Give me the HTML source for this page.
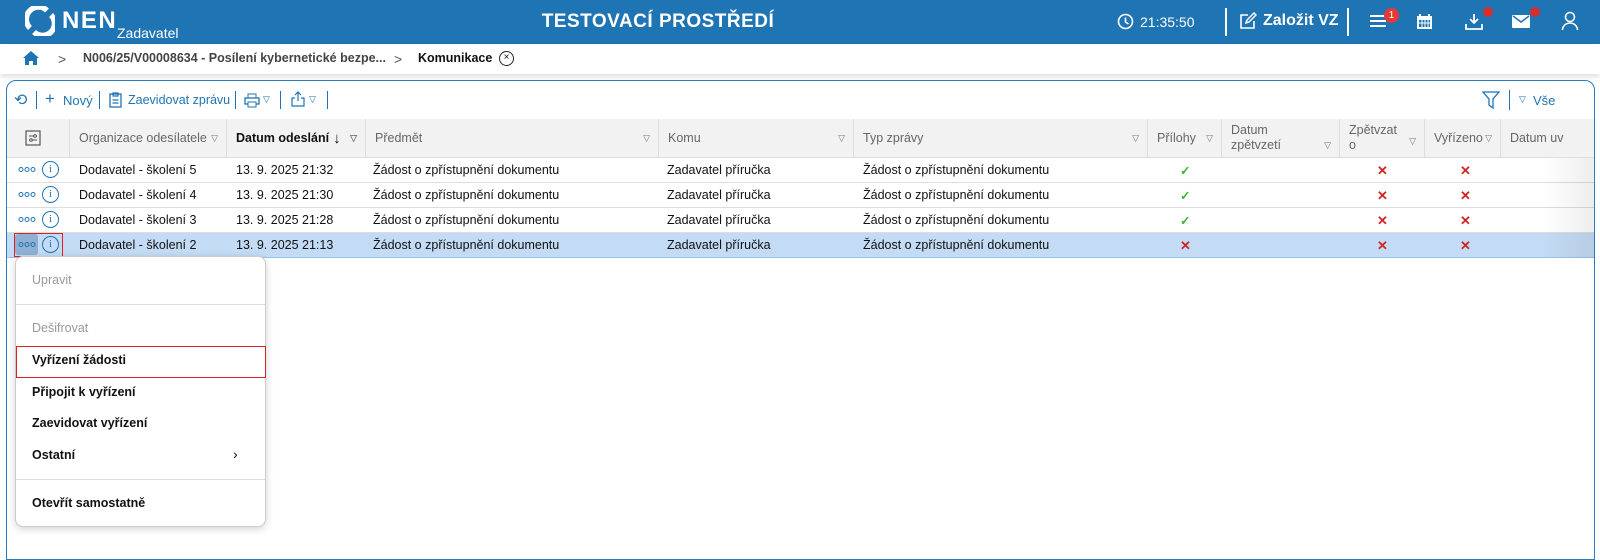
<!DOCTYPE html>
<html><head><meta charset="utf-8"><style>
*{box-sizing:border-box;margin:0;padding:0}
body{width:1600px;height:552px;overflow:hidden;background:#fff;font-family:"Liberation Sans",Arial,sans-serif;position:relative;font-size:12.5px;color:#111}
.abs{position:absolute}
.top{left:0;top:0;width:1600px;height:44px;background:#1f74b4;color:#fff}
.bc{left:0;top:44px;width:1600px;height:30px;background:#fff;box-shadow:0 3px 5px rgba(0,0,0,.12)}
.panel{left:6px;top:80px;width:1589px;height:480px;border:1px solid #2a7bbf;border-radius:10px 10px 0 0;background:#fff;overflow:hidden}
.th{position:absolute;top:38px;height:39px;background:#f2f2f2;border-right:1px solid #ddd;border-bottom:1px solid #ddd;color:#666;font-size:12.5px;padding:0 0 0 9px;display:flex;align-items:center}
.tri{position:absolute;right:8px;top:14px;font-size:9px;color:#777}
.row{position:absolute;left:0;width:1589px;height:25px;border-bottom:1px solid #ddd;font-size:12.5px}
.row span{position:absolute;top:5px}
.sel{background:#c3dbf4;border-bottom:1px solid #9cc3ea}
.x{color:#d32424;font-weight:bold;font-size:13px}
.ok{color:#3bb53b;font-weight:bold}
.menu{left:15px;top:256px;width:251px;height:271px;background:#fff;border:1px solid #ccc;border-radius:8px;box-shadow:0 2px 8px rgba(0,0,0,.18)}
.mi{position:absolute;left:16px;font-size:12.5px;font-weight:bold;color:#111}
.dots{position:absolute;left:11px;top:9px;width:18px;height:5px}
</style></head><body>
<div class="abs top">
 <svg class="abs" style="left:25px;top:6px" width="30" height="30" viewBox="0 0 30 30"><path d="M5 22 A11.5 11.5 0 0 1 22 4.5" stroke="#fff" stroke-width="5.5" fill="none"/><path d="M26 9 A11.5 11.5 0 0 1 9 26" stroke="#fff" stroke-width="5.5" fill="none"/></svg>
 <div class="abs" style="left:62px;top:7px;font-size:24px;font-weight:bold;letter-spacing:1.5px">NEN</div>
 <div class="abs" style="left:117px;top:25px;font-size:14px">Zadavatel</div>
 <div class="abs" style="left:0;width:1316px;top:11px;text-align:center;font-size:19px;font-weight:bold;letter-spacing:.5px">TESTOVACÍ PROSTŘEDÍ</div>
 <svg class="abs" style="left:1117px;top:13px" width="17" height="17" viewBox="0 0 17 17"><circle cx="8.5" cy="8.5" r="7" stroke="#fff" stroke-width="1.6" fill="none"/><path d="M8.5 4.5V9l3 2" stroke="#fff" stroke-width="1.6" fill="none"/></svg>
 <div class="abs" style="left:1140px;top:14px;font-size:14px">21:35:50</div>
 <div class="abs" style="left:1225px;top:8px;width:2px;height:28px;background:#fff"></div>
 <svg class="abs" style="left:1239px;top:12px" width="18" height="18" viewBox="0 0 18 18"><path d="M9 3H2v13h13V9" stroke="#fff" stroke-width="1.6" fill="none"/><path d="M7 11l1-3 7-7 2 2-7 7z" stroke="#fff" stroke-width="1.5" fill="none"/></svg>
 <div class="abs" style="left:1263px;top:12px;font-size:16px;font-weight:bold">Založit VZ</div>
 <div class="abs" style="left:1347px;top:8px;width:2px;height:28px;background:#fff"></div>
 <div class="abs" style="left:1370px;top:15px;width:16px;height:2px;background:#fff;box-shadow:0 5px #fff,0 10px #fff"></div>
 <div class="abs" style="left:1384px;top:8px;width:15px;height:15px;border-radius:50%;background:#e53935;font-size:10px;text-align:center;line-height:15px">1</div>
 <svg class="abs" style="left:1416px;top:13px" width="17" height="17" viewBox="0 0 17 17"><rect x="1" y="3" width="15" height="13" fill="#fff"/><rect x="3" y="7" width="11" height="7" fill="#1f74b4"/><path d="M4 1v4M13 1v4" stroke="#fff" stroke-width="2"/><path d="M6 7v7M9 7v7M12 7v7M3 10h11" stroke="#fff"/></svg>
 <svg class="abs" style="left:1465px;top:13px" width="18" height="18" viewBox="0 0 18 18"><path d="M9 1v9M5 6l4 4 4-4M1 11v5h16v-5" stroke="#fff" stroke-width="1.8" fill="none"/></svg>
 <div class="abs" style="left:1483px;top:7px;width:10px;height:10px;border-radius:50%;background:#d32f2f"></div>
 <svg class="abs" style="left:1512px;top:15px" width="18" height="13" viewBox="0 0 18 13"><rect width="18" height="13" rx="1" fill="#fff"/><path d="M1 1l8 6 8-6" stroke="#1f74b4" stroke-width="1.5" fill="none"/></svg>
 <div class="abs" style="left:1530px;top:7px;width:10px;height:10px;border-radius:50%;background:#d32f2f"></div>
 <svg class="abs" style="left:1561px;top:11px" width="18" height="20" viewBox="0 0 18 20"><circle cx="9" cy="6" r="4.5" stroke="#fff" stroke-width="1.6" fill="none"/><path d="M1.5 19a7.5 7 0 0 1 15 0" stroke="#fff" stroke-width="1.6" fill="none"/></svg>
</div>
<div class="abs bc">
 <svg class="abs" style="left:22px;top:6px" width="18" height="16" viewBox="0 0 18 16"><path d="M9 1L1 8h2v7h4v-4h4v4h4V8h2z" fill="#1f74b4"/></svg>
 <div class="abs" style="left:58px;top:7px;color:#555;font-size:14px">&gt;</div>
 <div class="abs" style="left:83px;top:7px;color:#444;font-weight:bold;font-size:12.5px">N006/25/V00008634 - Posílení kybernetické bezpe...</div>
 <div class="abs" style="left:394px;top:7px;color:#555;font-size:14px">&gt;</div>
 <div class="abs" style="left:418px;top:7px;color:#111;font-weight:bold;font-size:12.5px">Komunikace</div>
 <div class="abs" style="left:499px;top:7px;width:15px;height:15px;border:1.5px solid #222;border-radius:50%;font-size:10px;text-align:center;line-height:12px">×</div>
</div>
<div class="abs panel">
 <div class="abs" style="left:0;top:0;width:1589px;height:38px;color:#1f74b4;font-size:13px">
  <div class="abs" style="left:7px;top:9px;font-size:16px">⟲</div>
  <div class="abs" style="left:29px;top:10px;width:1px;height:18px;background:#1f74b4"></div>
  <div class="abs" style="left:38px;top:8px;font-size:17px">+</div>
  <div class="abs" style="left:56px;top:12px">Nový</div>
  <div class="abs" style="left:92px;top:10px;width:1px;height:18px;background:#1f74b4"></div>
  <svg class="abs" style="left:102px;top:11px" width="13" height="16" viewBox="0 0 13 16"><rect x="1" y="2" width="11" height="13" stroke="#1f74b4" fill="none" stroke-width="1.3"/><path d="M4 1h5v3H4zM3.5 8h6M3.5 11h6" stroke="#1f74b4" fill="none" stroke-width="1.2"/></svg>
  <div class="abs" style="left:121px;top:12px;font-size:12.5px">Zaevidovat zprávu</div>
  <div class="abs" style="left:228px;top:10px;width:1px;height:18px;background:#1f74b4"></div>
  <svg class="abs" style="left:237px;top:12px" width="16" height="15" viewBox="0 0 16 15"><rect x="1" y="5" width="14" height="6" stroke="#1f74b4" fill="none" stroke-width="1.3"/><rect x="4" y="1" width="8" height="4" stroke="#1f74b4" fill="none"/><rect x="4" y="9" width="8" height="5" stroke="#1f74b4" fill="#fff"/></svg>
  <div class="abs" style="left:256px;top:13px;font-size:9px">▽</div>
  <div class="abs" style="left:273px;top:10px;width:1px;height:18px;background:#1f74b4"></div>
  <svg class="abs" style="left:284px;top:10px" width="14" height="16" viewBox="0 0 14 16"><path d="M7 10V1M4 4l3-3 3 3M4 7H1v8h12V7h-3" stroke="#1f74b4" fill="none" stroke-width="1.2"/></svg>
  <div class="abs" style="left:302px;top:13px;font-size:9px">▽</div>
  <div class="abs" style="left:320px;top:10px;width:1px;height:18px;background:#1f74b4"></div>
  <svg class="abs" style="left:1475px;top:10px" width="18" height="18" viewBox="0 0 18 18"><path d="M1 1h16l-6 7v9l-4-3V8z" stroke="#1f74b4" fill="none" stroke-width="1.3"/></svg>
  <div class="abs" style="left:1502px;top:9px;width:1px;height:20px;background:#1f74b4"></div>
  <div class="abs" style="left:1512px;top:13px;font-size:9px">▽</div>
  <div class="abs" style="left:1526px;top:12px">Vše</div>
 </div>
 <div class="th" style="left:0;width:63px"><svg style="margin-left:9px" width="16" height="16" viewBox="0 0 16 16"><rect x="1" y="1" width="14" height="14" stroke="#555" fill="none" stroke-width="1.2"/><path d="M4 6h8M4 10h8" stroke="#555"/><circle cx="10" cy="6" r="1.3" fill="#fff" stroke="#555"/><circle cx="6" cy="10" r="1.3" fill="#fff" stroke="#555"/></svg></div>
 <div class="th" style="left:63px;width:157px">Organizace odesílatele<span class="tri">▽</span></div>
 <div class="th" style="left:220px;width:139px;color:#111;font-weight:bold">Datum odeslání <span style="font-weight:normal;margin-left:4px;font-size:15px">↓</span><span class="tri">▽</span></div>
 <div class="th" style="left:359px;width:293px">Předmět<span class="tri">▽</span></div>
 <div class="th" style="left:652px;width:195px">Komu<span class="tri">▽</span></div>
 <div class="th" style="left:847px;width:294px">Typ zprávy<span class="tri">▽</span></div>
 <div class="th" style="left:1141px;width:74px">Přílohy<span class="tri">▽</span></div>
 <div class="th" style="left:1215px;width:118px;line-height:15px">Datum<br>zpětvzetí<span class="tri" style="top:19px">▽</span></div>
 <div class="th" style="left:1333px;width:85px;line-height:15px">Zpětvzat<br>o<span class="tri" style="top:15px">▽</span></div>
 <div class="th" style="left:1418px;width:76px">Vyřízeno<span class="tri">▽</span></div>
 <div class="th" style="left:1494px;width:95px;border-right:none">Datum uv</div>

 <div class="row" style="top:77px"><svg class="dots"><circle cx="3" cy="2.5" r="2" stroke="#1f74b4" fill="none"/><circle cx="9" cy="2.5" r="2" stroke="#1f74b4" fill="none"/><circle cx="15" cy="2.5" r="2" stroke="#1f74b4" fill="none"/></svg><span style="left:35px;top:3px;width:17px;height:17px;border:1.3px solid #1f74b4;border-radius:50%;color:#1f74b4;font-size:11px;text-align:center;line-height:14px;font-family:'Liberation Serif'">i</span><span style="left:72px">Dodavatel - školení 5</span><span style="left:229px">13. 9. 2025 21:32</span><span style="left:366px">Žádost o zpřístupnění dokumentu</span><span style="left:660px">Zadavatel příručka</span><span style="left:856px">Žádost o zpřístupnění dokumentu</span><span class="ok" style="left:1173px">✓</span><span class="x" style="left:1370px">✕</span><span class="x" style="left:1453px">✕</span></div>
 <div class="row" style="top:102px"><svg class="dots"><circle cx="3" cy="2.5" r="2" stroke="#1f74b4" fill="none"/><circle cx="9" cy="2.5" r="2" stroke="#1f74b4" fill="none"/><circle cx="15" cy="2.5" r="2" stroke="#1f74b4" fill="none"/></svg><span style="left:35px;top:3px;width:17px;height:17px;border:1.3px solid #1f74b4;border-radius:50%;color:#1f74b4;font-size:11px;text-align:center;line-height:14px;font-family:'Liberation Serif'">i</span><span style="left:72px">Dodavatel - školení 4</span><span style="left:229px">13. 9. 2025 21:30</span><span style="left:366px">Žádost o zpřístupnění dokumentu</span><span style="left:660px">Zadavatel příručka</span><span style="left:856px">Žádost o zpřístupnění dokumentu</span><span class="ok" style="left:1173px">✓</span><span class="x" style="left:1370px">✕</span><span class="x" style="left:1453px">✕</span></div>
 <div class="row" style="top:127px"><svg class="dots"><circle cx="3" cy="2.5" r="2" stroke="#1f74b4" fill="none"/><circle cx="9" cy="2.5" r="2" stroke="#1f74b4" fill="none"/><circle cx="15" cy="2.5" r="2" stroke="#1f74b4" fill="none"/></svg><span style="left:35px;top:3px;width:17px;height:17px;border:1.3px solid #1f74b4;border-radius:50%;color:#1f74b4;font-size:11px;text-align:center;line-height:14px;font-family:'Liberation Serif'">i</span><span style="left:72px">Dodavatel - školení 3</span><span style="left:229px">13. 9. 2025 21:28</span><span style="left:366px">Žádost o zpřístupnění dokumentu</span><span style="left:660px">Zadavatel příručka</span><span style="left:856px">Žádost o zpřístupnění dokumentu</span><span class="ok" style="left:1173px">✓</span><span class="x" style="left:1370px">✕</span><span class="x" style="left:1453px">✕</span></div>
 <div class="row sel" style="top:152px"><span style="left:8px;top:1px;width:23px;height:21px;background:#8fb0d2;border-radius:3px"></span><span style="left:7px;top:0;width:49px;height:24px;border:1px solid #e02020"></span><svg class="dots"><circle cx="3" cy="2.5" r="2" stroke="#1f74b4" fill="none"/><circle cx="9" cy="2.5" r="2" stroke="#1f74b4" fill="none"/><circle cx="15" cy="2.5" r="2" stroke="#1f74b4" fill="none"/></svg><span style="left:35px;top:3px;width:17px;height:17px;border:1.3px solid #1f74b4;border-radius:50%;color:#1f74b4;font-size:11px;text-align:center;line-height:14px;font-family:'Liberation Serif'">i</span><span style="left:72px">Dodavatel - školení 2</span><span style="left:229px">13. 9. 2025 21:13</span><span style="left:366px">Žádost o zpřístupnění dokumentu</span><span style="left:660px">Zadavatel příručka</span><span style="left:856px">Žádost o zpřístupnění dokumentu</span><span class="x" style="left:1173px">✕</span><span class="x" style="left:1370px">✕</span><span class="x" style="left:1453px">✕</span></div>
 <div class="abs" style="left:1535px;top:77px;width:54px;height:100px;background:linear-gradient(90deg,rgba(0,0,0,0),rgba(0,0,0,.07))"></div>
</div>
<div class="abs menu">
 <div class="mi" style="top:16px;color:#999;font-weight:normal">Upravit</div>
 <div class="abs" style="left:0;top:47px;width:249px;height:1px;background:#ddd"></div>
 <div class="mi" style="top:64px;color:#999;font-weight:normal">Dešifrovat</div>
 <div class="abs" style="left:0;top:89px;width:250px;height:32px;border:1px solid #e02020"></div>
 <div class="mi" style="top:96px">Vyřízení žádosti</div>
 <div class="mi" style="top:128px">Připojit k vyřízení</div>
 <div class="mi" style="top:159px">Zaevidovat vyřízení</div>
 <div class="mi" style="top:191px">Ostatní</div>
 <div class="abs" style="left:217px;top:189px;font-size:14px">›</div>
 <div class="abs" style="left:0;top:222px;width:249px;height:1px;background:#ddd"></div>
 <div class="mi" style="top:239px">Otevřít samostatně</div>
</div>
</body></html>
